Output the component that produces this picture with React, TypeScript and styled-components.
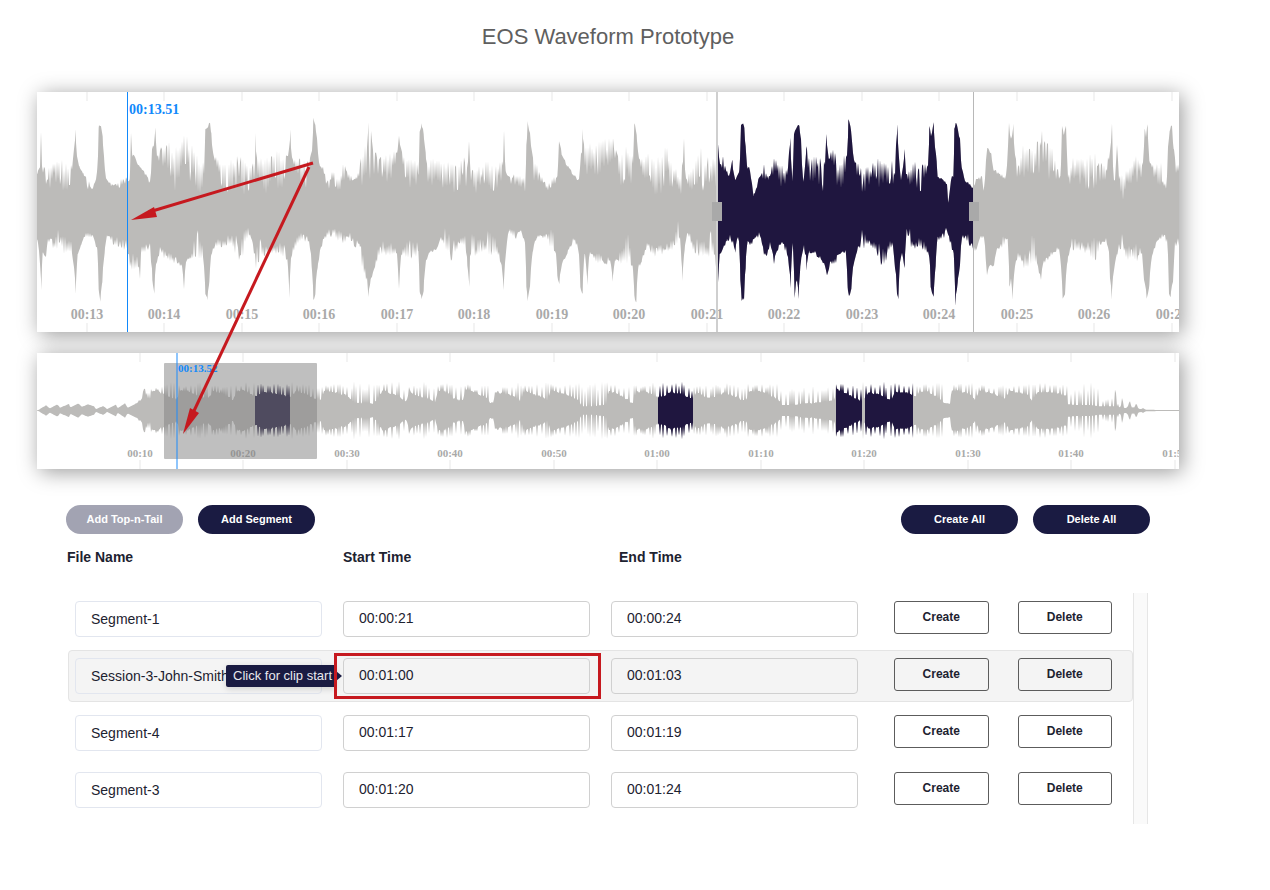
import React, { useId, useState } from "react";
import styled, { createGlobalStyle, css } from "styled-components";

const NAVY = "#1a1b42";
const RED = "#c6191f";
const BLUE = "#1189fb";
const WAVE = "#bcbbb9";
const WAVE_SEGMENT = "#1f163f";

const GlobalStyle = createGlobalStyle`
  *, *::before, *::after { box-sizing: border-box; }
  body {
    margin: 0;
    background: #fff;
    color: #1d2230;
    font-family: "Liberation Sans", Arial, Helvetica, sans-serif;
    font-size: 14px;
  }
`;

/* ---------- waveform data ---------- */

// Traces are sampled at three units per pixel: [x, tip, core]. The wave
// jitters between tip (outermost) and core (solid body).
type Point = [number, number, number?];
type Chunk = { from: number; points: Point[] };

const TOP: Chunk[] = [
  {
    from: -51,
    points: [
      [52, 280], [60, 262], [63, 155], [66, 262], [72, 262, 310], [90, 260, 325], [107, 248, 310], [128, 250, 345],
      [150, 255, 330], [159, 240], [162, 205], [167, 152], [171, 225], [178, 262], [190, 280], [204, 300, 325],
      [216, 325], [228, 300], [232, 265], [236, 142], [242, 135], [248, 165], [253, 240], [258, 295], [272, 315],
      [300, 300, 325], [318, 290, 315], [329, 300], [333, 160], [337, 225], [345, 235], [360, 262], [375, 280],
      [390, 300, 315], [396, 205], [401, 200], [406, 138], [411, 225], [428, 200, 300], [445, 195, 295],
      [463, 205, 340], [484, 195, 300], [490, 150, 270], [505, 190, 300], [520, 195, 300], [535, 240, 350],
      [550, 245, 330], [556, 150], [563, 140], [570, 130], [574, 160], [580, 225], [600, 240, 315], [622, 245, 345],
      [650, 235, 340], [690, 250, 345], [702, 250, 320], [707, 160], [712, 240, 310], [740, 240, 350],
      [768, 215, 330], [795, 240, 345], [804, 225], [811, 152], [816, 235], [840, 235, 345], [860, 255, 320],
      [876, 215], [880, 113], [886, 138], [891, 170], [897, 250], [910, 260, 285], [922, 300, 330], [940, 270, 320],
      [955, 300, 350], [970, 240, 310], [990, 290, 310], [1006, 300], [1020, 240, 320], [1030, 195, 320],
      [1040, 210, 300], [1045, 128], [1049, 260, 345], [1053, 155], [1062, 215, 325], [1080, 235, 310],
      [1100, 225, 325], [1118, 215, 320], [1133, 210], [1137, 172], [1143, 210], [1155, 230, 310],
      [1174, 240, 345], [1190, 230, 320],
    ],
  },
  {
    from: 1119,
    points: [
      [25, 280], [29, 160], [35, 135], [41, 160], [47, 215], [52, 260, 330], [62, 245, 345], [85, 240, 310],
      [102, 250, 345], [118, 240, 310], [134, 260, 350], [158, 230, 320], [170, 260, 370], [177, 185],
      [182, 260, 345], [205, 265, 360], [228, 250, 320], [250, 260, 340], [276, 235, 320], [282, 150], [287, 275],
      [300, 290, 325], [328, 280, 315], [346, 300, 335], [349, 200], [353, 125], [360, 160], [366, 220],
      [371, 240, 310], [390, 280, 315], [410, 315, 330], [430, 290, 325], [442, 290], [447, 182], [455, 220],
      [470, 255], [490, 285], [506, 300], [512, 235, 300], [518, 150], [524, 210, 260], [545, 200, 335],
      [560, 190, 300], [578, 165, 300], [592, 200, 290], [600, 160, 260], [612, 190, 280], [630, 230, 320],
      [648, 205, 310], [666, 235, 310], [673, 125], [680, 160], [687, 230], [700, 235, 310], [716, 220, 300],
      [735, 250, 370], [762, 200, 320], [785, 245, 330], [812, 290, 360], [822, 172], [829, 300, 340],
      [850, 255, 330], [872, 210, 345], [884, 240, 350], [902, 240, 320], [918, 240, 320], [922, 150], [930, 255],
      [940, 215, 270], [950, 275], [957, 285], [967, 235], [976, 305], [988, 270], [993, 140], [998, 127],
      [1003, 145], [1007, 195], [1013, 270], [1022, 255, 285], [1031, 345], [1045, 298], [1060, 250, 300],
      [1075, 295], [1090, 235, 280], [1106, 240, 320], [1125, 280, 315], [1133, 240, 280], [1141, 170],
      [1147, 300], [1152, 160], [1158, 145], [1163, 133], [1168, 140], [1173, 180], [1180, 305], [1189, 195],
      [1195, 220, 300],
    ],
  },
  {
    from: 2289,
    points: [
      [2, 170], [9, 320], [18, 195], [30, 225, 320], [50, 225, 310], [70, 240, 350], [79, 160], [86, 235],
      [103, 200, 270], [114, 270, 345], [132, 230, 320], [141, 230], [145, 117], [151, 140], [156, 180], [162, 240],
      [175, 245, 325], [190, 260, 350], [206, 250, 320], [220, 260, 340], [244, 235, 320], [262, 260, 320],
      [277, 235, 320], [283, 280, 350], [288, 200], [292, 132], [297, 230], [303, 300], [314, 205], [320, 280, 320],
      [345, 250, 320], [362, 255, 340], [384, 260], [388, 142], [393, 168], [401, 130], [405, 200], [410, 240],
      [413, 290], [430, 300], [441, 312], [445, 365], [450, 300, 325], [460, 285], [463, 150], [467, 126],
      [474, 150], [480, 180], [485, 260], [495, 300], [512, 318], [520, 325], [530, 292, 310], [546, 290],
      [551, 335], [558, 240], [562, 205], [574, 218], [580, 270], [600, 285], [618, 285, 305], [624, 200],
      [627, 130], [633, 180], [640, 132], [645, 225], [652, 250, 310], [670, 195, 320], [690, 200, 270],
      [702, 210, 325], [723, 150, 250], [734, 190, 300], [752, 205, 310], [770, 230, 310], [781, 290],
      [786, 135], [791, 165], [798, 138], [803, 250, 310], [820, 235, 330], [836, 240, 335], [860, 240, 330],
      [883, 210, 330], [900, 260, 340], [920, 250, 320], [930, 210], [936, 130], [942, 300, 335], [951, 190],
      [958, 280, 330], [965, 290, 365], [985, 260, 330], [1010, 230, 310], [1026, 250, 300], [1034, 145],
      [1038, 170], [1043, 133], [1048, 240], [1065, 255, 310], [1085, 250, 320], [1100, 290, 355], [1104, 200],
      [1109, 148], [1116, 137], [1121, 205], [1128, 245, 285], [1143, 260, 285],
    ],
  },
];

const BOTTOM: Chunk[] = [
  {
    from: -51,
    points: [
      [52, 480], [60, 550], [64, 630], [68, 520], [78, 535], [84, 475], [100, 520, 465], [121, 490, 425],
      [128, 520, 465], [155, 515, 470], [162, 560], [167, 645], [173, 520], [184, 490], [196, 470, 455],
      [210, 470, 455], [222, 475], [232, 510], [236, 630], [241, 660], [247, 610], [254, 515], [262, 465],
      [284, 500, 465], [302, 500, 465], [320, 510, 460], [330, 560], [337, 580, 510], [350, 560, 515],
      [361, 600, 530], [370, 515, 490], [390, 515, 490], [397, 600], [403, 645], [408, 550], [420, 520, 500],
      [440, 540, 510], [470, 550, 530], [486, 555], [492, 628], [498, 550], [515, 540, 500], [532, 535, 435],
      [548, 545, 490], [556, 640], [562, 658], [568, 610], [574, 520], [585, 500, 475], [605, 498, 475],
      [630, 490, 465], [655, 545, 470], [670, 520, 440], [685, 470, 425], [698, 490], [704, 575, 500],
      [712, 560, 450], [735, 525, 490], [760, 520, 480], [790, 530, 480], [802, 540], [808, 650], [815, 530, 500],
      [832, 495, 465], [850, 475, 455], [866, 490, 470], [875, 560], [880, 660], [886, 645], [893, 560],
      [900, 515], [912, 475, 455], [940, 465, 445], [965, 490, 455], [985, 470, 450], [1005, 500, 460],
      [1018, 490], [1026, 570, 500], [1036, 600, 530], [1045, 650], [1052, 600], [1064, 565], [1076, 530, 490],
      [1100, 520, 475], [1128, 520, 490], [1137, 630], [1144, 520], [1165, 535, 470], [1190, 530, 485],
    ],
  },
  {
    from: 1119,
    points: [
      [25, 510], [29, 630], [35, 658], [41, 630], [48, 545], [60, 515], [80, 505], [92, 470], [101, 490, 440],
      [125, 550, 480], [150, 495, 480], [164, 490, 440], [172, 560], [178, 625], [184, 510, 440], [198, 530, 480],
      [218, 520, 470], [245, 525, 430], [262, 520, 480], [275, 560], [281, 635], [288, 515], [298, 450],
      [316, 480, 450], [333, 450], [345, 490], [349, 620], [353, 668], [360, 620], [368, 520], [380, 472],
      [410, 470, 460], [426, 515, 435], [436, 520, 490], [442, 590], [448, 615], [456, 550], [472, 520],
      [490, 485, 470], [504, 510, 480], [511, 620], [518, 640], [524, 520], [532, 615], [539, 520],
      [560, 545, 510], [590, 550, 520], [600, 540], [608, 605], [616, 540], [640, 550, 500], [658, 560, 430],
      [668, 560], [673, 650], [679, 665], [685, 560], [695, 545], [710, 500, 480], [732, 530, 490],
      [760, 515, 480], [785, 515, 480], [806, 480, 415], [814, 540], [818, 600], [824, 510], [832, 460],
      [850, 530, 460], [872, 520, 480], [890, 530, 490], [908, 520, 440], [917, 550], [923, 655], [929, 525],
      [942, 500], [950, 480], [960, 460, 480], [976, 515], [985, 455, 470], [991, 600], [995, 658], [1002, 658],
      [1007, 560], [1013, 485], [1024, 498, 485], [1036, 470], [1050, 450, 470], [1058, 520, 490], [1070, 530],
      [1080, 490], [1092, 548], [1100, 520, 495], [1116, 490], [1130, 520, 500], [1142, 628], [1148, 490],
      [1154, 655], [1160, 600], [1166, 655], [1174, 530], [1184, 510, 490], [1190, 570], [1196, 520],
    ],
  },
  {
    from: 2289,
    points: [
      [1, 640], [6, 520], [13, 500], [21, 570], [28, 515], [50, 525, 510], [66, 540], [81, 588], [90, 550],
      [104, 555, 530], [116, 520], [137, 515], [143, 620], [147, 652], [154, 630], [163, 540], [175, 500],
      [186, 510, 435], [205, 500, 480], [225, 510, 470], [240, 560, 490], [256, 550, 490], [275, 500, 480],
      [285, 560], [291, 640], [295, 658], [300, 550], [306, 520], [314, 560], [320, 450], [327, 500, 440],
      [342, 500, 480], [362, 500, 445], [376, 515, 490], [388, 530], [392, 620], [401, 655], [407, 560],
      [413, 475], [424, 480, 455], [438, 460, 440], [455, 510, 470], [461, 520], [466, 675], [473, 610],
      [480, 560], [486, 470], [500, 480, 460], [516, 510, 480], [530, 510], [540, 470], [552, 480, 465],
      [557, 540], [561, 585], [570, 555], [582, 560], [590, 510], [610, 495, 470], [623, 475], [628, 620],
      [633, 600], [638, 655], [645, 560], [655, 530, 510], [670, 560, 520], [685, 565, 520], [700, 560, 430],
      [712, 555, 530], [723, 600], [732, 545], [750, 535, 515], [776, 505, 500], [783, 560], [788, 660],
      [795, 640], [803, 540], [814, 510, 450], [840, 510, 490], [862, 515, 490], [886, 550, 470], [906, 490],
      [922, 490, 460], [930, 590], [935, 655], [942, 570], [952, 520], [963, 500, 460], [985, 545, 490],
      [1005, 545, 490], [1022, 520, 490], [1032, 600], [1040, 655], [1048, 620], [1056, 530], [1068, 490],
      [1085, 470, 460], [1102, 490, 460], [1107, 640], [1112, 655], [1119, 605], [1126, 500, 470],
      [1143, 490, 480],
    ],
  },
];

// Overview amplitude either side of the centre line: [x, body, transient].
const OVERVIEW: Chunk[] = [
  {
    from: -51,
    points: [
      [53, 0, 0], [78, 15, 15], [90, 6, 6], [112, 18, 18], [120, 8, 8], [147, 19, 19], [151, 9, 9], [175, 21, 21],
      [185, 11, 11], [205, 18, 18], [222, 12, 12], [228, 4, 4], [250, 13, 13], [261, 4, 4], [288, 17, 17],
      [293, 6, 6], [315, 21, 21], [323, 8, 8], [345, 19, 19], [362, 30, 36], [368, 36, 50], [374, 74, 78],
      [379, 36, 50], [392, 32, 70], [397, 60, 72], [415, 58, 66], [435, 45, 74], [470, 34, 78], [482, 60, 80],
      [505, 58, 78], [540, 40, 80], [568, 38, 78], [578, 58, 78], [610, 50, 66], [640, 32, 80], [652, 60, 70],
      [675, 60, 80], [700, 44, 78], [712, 45, 80], [735, 55, 80], [770, 50, 78], [812, 40, 80], [830, 60, 80],
      [870, 44, 76], [890, 30, 76], [905, 34, 70], [912, 60, 70], [950, 52, 78], [980, 46, 76], [1000, 24, 78],
      [1062, 20, 78], [1078, 45, 80], [1090, 60, 78], [1130, 45, 80], [1158, 26, 70], [1170, 60, 78],
    ],
  },
  {
    from: 1119,
    points: [
      [0, 52, 78], [50, 36, 78], [76, 26, 78], [84, 62, 72], [105, 58, 80], [130, 38, 78], [158, 28, 76],
      [166, 64, 78], [200, 52, 66], [234, 36, 80], [240, 22, 22], [250, 22, 30], [256, 54, 60], [300, 48, 80],
      [330, 30, 78], [344, 58, 78], [390, 42, 80], [412, 30, 80], [422, 60, 78], [465, 50, 78], [505, 30, 78],
      [516, 12, 78], [550, 12, 76], [590, 18, 78], [596, 60, 78], [650, 34, 66], [668, 20, 70], [678, 54, 76],
      [710, 56, 80], [742, 40, 80], [760, 40, 80], [780, 56, 80], [820, 48, 78], [848, 32, 66], [858, 56, 78],
      [900, 36, 70], [942, 52, 80], [980, 40, 72], [1005, 26, 82], [1018, 56, 74], [1045, 58, 80], [1080, 46, 80],
      [1108, 30, 78], [1116, 16, 60], [1160, 17, 70],
    ],
  },
  {
    from: 2289,
    points: [
      [0, 20, 70], [60, 24, 66], [104, 32, 80], [110, 64, 80], [140, 50, 78], [186, 28, 80], [196, 40, 80],
      [204, 54, 72], [240, 46, 80], [272, 30, 72], [285, 54, 80], [325, 52, 80], [345, 42, 78], [356, 54, 72],
      [382, 58, 82], [402, 44, 74], [428, 30, 80], [431, 22, 22], [450, 20, 20], [455, 60, 78], [500, 54, 80],
      [525, 34, 78], [542, 58, 72], [600, 44, 76], [615, 34, 70], [628, 58, 72], [680, 50, 80], [695, 30, 70],
      [712, 54, 80], [740, 56, 76], [780, 50, 82], [800, 42, 80], [804, 18, 50], [830, 16, 66], [870, 16, 78],
      [900, 12, 78], [906, 12, 30], [942, 12, 36], [946, 78, 80], [950, 12, 20], [962, 8, 20], [967, 42, 45],
      [972, 8, 10], [982, 6, 10], [988, 28, 30], [996, 8, 10], [1003, 8, 10], [1009, 22, 22], [1014, 6, 8],
      [1022, 4, 6], [1030, 6, 7], [1036, 2, 2], [1050, 2, 2], [1080, 1, 1], [1143, 1, 1],
    ],
  },
];

const random = (seed: number) => {
  let s = seed;
  return () => {
    s = (s * 1664525 + 1013904223) % 4294967296;
    return s / 4294967296;
  };
};

const flatten = (chunks: Chunk[]) =>
  chunks.flatMap(({ from, points }) =>
    points.map(([x, tip, core]) => [x + from, tip, core ?? tip] as [number, number, number]),
  );

// With a centre line given, steep flanks fall away quickly from their peak.
const interpolate = (points: [number, number, number][], x: number, centre?: number) => {
  let i = 1;
  while (i < points.length - 1 && points[i][0] < x) i += 1;
  const [ax, at, ac] = points[i - 1];
  const [bx, bt, bc] = points[i];
  let k = Math.min(1, Math.max(0, (x - ax) / (bx - ax)));
  if (centre !== undefined && Math.abs(at - bt) > 45) {
    const falling = Math.abs(at - centre) > Math.abs(bt - centre);
    k = falling ? Math.pow(k, 0.6) : 1 - Math.pow(1 - k, 0.6);
  }
  return [at + (bt - at) * k, ac + (bc - ac) * k];
};

const WIDTH = 1142;
const UNITS = WIDTH * 3;

const edge = (chunks: Chunk[], seed: number) => {
  const points = flatten(chunks);
  const next = random(seed);
  const xs = new Set<number>(points.filter(([, tip, core]) => tip === core).map(([x]) => x));
  for (let x = 0; x <= UNITS; x += 3) xs.add(x);
  let high = false;
  return [...xs]
    .filter((x) => x >= 0 && x <= UNITS)
    .sort((a, b) => a - b)
    .map((x) => {
      const [tip, core] = interpolate(points, x, 396);
      high = next() > 0.15 ? !high : high;
      const mix = high ? next() * 0.3 - 0.1 : 0.45 + next() * 0.55;
      return `${x},${Math.round(tip + (core - tip) * mix + (next() - 0.5) * 10)}`;
    });
};

const detailPath = `M${edge(TOP, 11).join("L")}L${edge(BOTTOM, 29).reverse().join("L")}Z`;

const overviewPath = (() => {
  const points = flatten(OVERVIEW);
  const next = random(7);
  const upper: string[] = [];
  const lower: string[] = [];
  let until = 9;
  for (let x = 0; x <= UNITS; x += 3) {
    const [body, peak] = interpolate(points, x);
    until -= 3;
    const hit = until <= 0;
    if (hit) until = 6 + Math.floor(next() * 4) * 3;
    const reach = hit ? 0.7 + next() * 0.5 : 0;
    const rough = body > 22 ? (next() - 0.5) * 6 : 0;
    const size = body + (peak - body) * reach + rough;
    upper.push(`${x},${Math.round(211 - size)}`);
    lower.push(`${x},${Math.round(212 + size)}`);
  }
  return `M${upper.join("L")}L${lower.reverse().join("L")}Z`;
})();

const clock = (seconds: number) =>
  `${String(Math.floor(seconds / 60)).padStart(2, "0")}:${String(seconds % 60).padStart(2, "0")}`;

/* ---------- waveform panels ---------- */

const Waves = styled.section`
  position: relative;
  display: flex;
  flex-direction: column;
  gap: 21px;
`;

const Panel = styled.div`
  background: #fff;
  box-shadow: 3px 3px 20px rgba(0, 0, 0, 0.4);
`;

const Chart = styled.svg`
  display: block;
  width: 100%;
  height: auto;
  overflow: hidden;
  font-family: "Liberation Serif", "Times New Roman", serif;
  font-weight: bold;
`;

const AxisLabel = styled.text<{ $size: number }>`
  fill: #a9a9a9;
  font-size: ${({ $size }) => $size}px;
  text-anchor: middle;
`;

const PlayheadLabel = styled.text<{ $size: number }>`
  fill: ${BLUE};
  font-size: ${({ $size }) => $size}px;
`;

const Annotation = styled.svg`
  position: absolute;
  inset: 0;
  width: 100%;
  height: 100%;
  pointer-events: none;
`;

type AxisProps = {
  height: number;
  start: number;
  step: number;
  first: number;
  interval: number;
  count: number;
  size: number;
  baseline: number;
};

function Axis({ height, start, step, first, interval, count, size, baseline }: AxisProps) {
  return (
    <>
      {Array.from({ length: count }, (_, i) => {
        const x = Math.floor(start + step * i);
        return (
          <g key={i}>
            <rect x={x - 1} y={0} width={2} height={9} fill="#f3f3f3" />
            <rect x={x - 1} y={height - 9} width={2} height={9} fill="#f3f3f3" />
            <AxisLabel x={x} y={baseline} $size={size}>{clock(first + interval * i)}</AxisLabel>
          </g>
        );
      })}
    </>
  );
}

function Wave({ path, top, segments }: { path: string; top: number; segments: [number, number][] }) {
  const id = useId();
  return (
    <>
      <clipPath id={id}>
        {segments.map(([from, to]) => (
          <rect key={from} x={from} y={0} width={to - from} height={240} />
        ))}
      </clipPath>
      <path d={path} fill={WAVE} transform={`translate(0 ${top}) scale(${1 / 3})`} />
      <g clipPath={`url(#${id})`}>
        <path d={path} fill={WAVE_SEGMENT} transform={`translate(0 ${top}) scale(${1 / 3})`} />
      </g>
    </>
  );
}

function DetailWaveform() {
  return (
    <Panel>
      <Chart viewBox="0 0 1142 240" role="img" aria-label="Zoomed waveform">
        <Wave path={detailPath} top={-12} segments={[[680, 936]]} />
        <Axis height={240} start={50} step={77.5} first={13} interval={1} count={15} size={14} baseline={227} />
        <rect x={679} y={0} width={2} height={240} fill="#cfcfcf" />
        <rect x={936} y={0} width={1} height={240} fill="#b8b8b8" />
        <rect x={675} y={110} width={10} height={19} fill="#a9a9a9" />
        <rect x={932} y={110} width={10} height={19} fill="#a9a9a9" />
        <rect x={90} y={0} width={1} height={240} fill={BLUE} />
        <PlayheadLabel x={92} y={22} $size={14}>00:13.51</PlayheadLabel>
      </Chart>
    </Panel>
  );
}

function OverviewWaveform() {
  return (
    <Panel>
      <Chart viewBox="0 0 1142 116" role="img" aria-label="Waveform overview">
        <Wave path={overviewPath} top={-13} segments={[[218, 253], [621, 656], [799, 825], [828, 876]]} />
        <Axis height={116} start={103} step={103.5} first={10} interval={10} count={11} size={11} baseline={104} />
        <rect x={127} y={10} width={153} height={96} rx={1} fill="rgba(128, 128, 128, 0.5)" />
        <rect x={139} y={0} width={2} height={116} fill="rgba(30, 140, 250, 0.5)" />
        <PlayheadLabel x={141} y={19} $size={11}>00:13.52</PlayheadLabel>
      </Chart>
    </Panel>
  );
}

/* ---------- page ---------- */

const Page = styled.main`
  padding: 24px 91px 64px 37px;
`;

const Title = styled.h1`
  margin: 0 0 42px;
  color: #5f5f5f;
  font-size: 22px;
  font-weight: normal;
  line-height: 26px;
  text-align: center;
`;

const Editor = styled.section`
  margin: 36px 29px 0;
`;

const Toolbar = styled.div`
  display: flex;
  gap: 15px;
`;

const PillButton = styled.button<{ $pushRight?: boolean }>`
  width: 117px;
  height: 29px;
  margin-left: ${({ $pushRight }) => ($pushRight ? "auto" : "0")};
  padding: 0 0 2px;
  border: 0;
  border-radius: 15px;
  background: ${NAVY};
  color: #fff;
  font: bold 11px "Liberation Sans", Arial, sans-serif;
  &:disabled { opacity: 0.4; }
`;

const SegmentTable = styled.table`
  display: block;
`;

const Head = styled.thead`
  display: block;
`;

const HeadRow = styled.tr`
  display: grid;
  grid-template-columns: repeat(3, 1fr) 255px;
  padding: 14px 0 27px 1px;
`;

const HeadCell = styled.th`
  padding: 0;
  font-size: 14px;
  line-height: 18px;
  text-align: left;
`;

const Body = styled.tbody`
  display: grid;
  grid-template-columns: 1fr 15px;
  grid-template-rows: repeat(4, auto) 3px;
  row-gap: 5px;
  margin: 0 2px;
  &::after {
    content: "";
    grid-column: 2;
    grid-row: 1 / -1;
    border: solid #e6e6e6;
    border-width: 0 1px;
    background: #fafafa;
  }
`;

const Row = styled.tr<{ $active: boolean }>`
  display: grid;
  grid-column: 1;
  grid-template-columns: repeat(3, 1fr) 233px;
  column-gap: 21px;
  padding: 7px 20px 7px 6px;
  border: 1px solid transparent;
  border-radius: 4px;
  ${({ $active }) => $active && css`
    border-color: #e4e4e4;
    background: #f4f4f4;
  `}
`;

const Cell = styled.td`
  position: relative;
  padding: 0;
`;

const ActionCell = styled.td`
  display: flex;
  align-items: flex-start;
  gap: 29px;
  padding: 0 0 0 15px;
`;

const Field = styled.input<{ $name?: boolean }>`
  display: block;
  width: 100%;
  height: 36px;
  padding: ${({ $name }) => ($name ? "0 15px" : "0 15px 2px")};
  border: 1px solid ${({ $name }) => ($name ? "#e2e6ef" : "#d0d0d0")};
  border-radius: 4px;
  outline: 0;
  background: transparent;
  color: inherit;
  font: 14px "Liberation Sans", Arial, sans-serif;
`;

const ActionButton = styled.button`
  flex: 1;
  height: 33px;
  padding: 0 0 2px;
  border: 1px solid #5c5c5c;
  border-radius: 3px;
  background: transparent;
  color: inherit;
  font: bold 12px "Liberation Sans", Arial, sans-serif;
`;

const Tooltip = styled.span`
  position: absolute;
  top: 7px;
  right: calc(100% + 7px);
  padding: 0 4px 0 7px;
  border-radius: 2px;
  background: ${NAVY};
  box-shadow: 0 2px 6px rgba(0, 0, 0, 0.15);
  color: #e9e9ee;
  font-size: 13px;
  line-height: 22px;
  white-space: nowrap;
  &::after {
    content: "";
    position: absolute;
    top: 6px;
    left: 100%;
    border: 5px solid transparent;
    border-left: 6px solid ${NAVY};
    border-right: 0;
  }
`;

const Highlight = styled.span`
  position: absolute;
  inset: -5px -11px -5px -9px;
  border: 3px solid ${RED};
  pointer-events: none;
`;

type Segment = { name: string; start: string; end: string; active?: boolean };

const SEGMENTS: Segment[] = [
  { name: "Segment-1", start: "00:00:21", end: "00:00:24" },
  { name: "Session-3-John-Smith", start: "00:01:00", end: "00:01:03", active: true },
  { name: "Segment-4", start: "00:01:17", end: "00:01:19" },
  { name: "Segment-3", start: "00:01:20", end: "00:01:24" },
];

function SegmentRow({ name, start, end, active = false }: Segment) {
  const [values, setValues] = useState({ name, start, end });
  const bind = (key: "name" | "start" | "end", label: string) => ({
    "aria-label": label,
    value: values[key],
    onChange: (e: React.ChangeEvent<HTMLInputElement>) => setValues({ ...values, [key]: e.target.value }),
  });
  return (
    <Row $active={active}>
      <Cell><Field type="text" $name {...bind("name", "File Name")} /></Cell>
      <Cell>
        <Field type="text" {...bind("start", "Start Time")} />
        {active && <Tooltip role="tooltip">Click for clip start</Tooltip>}
        {active && <Highlight />}
      </Cell>
      <Cell><Field type="text" {...bind("end", "End Time")} /></Cell>
      <ActionCell>
        <ActionButton type="button">Create</ActionButton>
        <ActionButton type="button">Delete</ActionButton>
      </ActionCell>
    </Row>
  );
}

export default function App() {
  return (
    <>
      <GlobalStyle />
      <Page>
        <Title>EOS Waveform Prototype</Title>
        <Waves>
          <DetailWaveform />
          <OverviewWaveform />
          <Annotation viewBox="0 0 1142 377" aria-hidden="true">
            <g stroke={RED} strokeWidth={3} fill="none">
              <path d="M276 71L112 120" />
              <path d="M272 75L156 321" />
            </g>
            <path d="M94 128L117 115L120 125Z" fill={RED} />
            <path d="M146 342L153 316L162 321Z" fill={RED} />
          </Annotation>
        </Waves>
        <Editor>
          <Toolbar>
            <PillButton type="button" disabled>Add Top-n-Tail</PillButton>
            <PillButton type="button">Add Segment</PillButton>
            <PillButton type="button" $pushRight>Create All</PillButton>
            <PillButton type="button">Delete All</PillButton>
          </Toolbar>
          <SegmentTable>
            <Head>
              <HeadRow>
                <HeadCell scope="col">File Name</HeadCell>
                <HeadCell scope="col">Start Time</HeadCell>
                <HeadCell scope="col">End Time</HeadCell>
              </HeadRow>
            </Head>
            <Body>
              {SEGMENTS.map((segment) => (
                <SegmentRow key={segment.name} {...segment} />
              ))}
            </Body>
          </SegmentTable>
        </Editor>
      </Page>
    </>
  );
}
